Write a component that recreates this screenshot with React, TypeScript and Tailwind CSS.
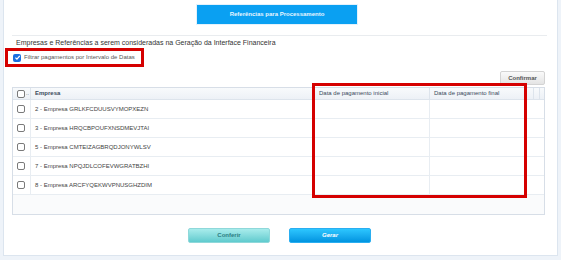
import React from 'react';

const rows = [
  '2 - Empresa GRLKFCDUUSVYMOPXEZN',
  '3 - Empresa HRQCBPOUFXNSDMEVJTAI',
  '5 - Empresa CMTEIZAGBRQDJONYWLSV',
  '7 - Empresa NPQJDLCOFEVWGRATBZHI',
  '8 - Empresa ARCFYQEKWVPNUSGHZDIM',
];

const Box: React.FC<{ checked?: boolean }> = ({ checked }) =>
  checked ? (
    <span className="flex h-[8px] w-[8px] items-center justify-center rounded-[2px] bg-[#1a6fe0]">
      <svg width="7" height="7" viewBox="0 0 10 10">
        <path d="M2 5.2 L4.2 7.4 L8.2 2.6" stroke="white" strokeWidth="1.8" fill="none" />
      </svg>
    </span>
  ) : (
    <span className="block h-[8px] w-[8px] rounded-[2px] border border-[#7a7a7a] bg-white" />
  );

export default function App() {
  return (
    <div className="h-[260px] w-[561px] overflow-hidden bg-[#eef3f9] px-[3px] font-['Liberation_Sans',Arial,sans-serif]">
      <div className="h-[256px] border-x border-b border-[#dce5ef] bg-white pt-[5px]">
        <div className="ml-[193px] flex h-[19px] w-[160px] items-center justify-center bg-[#0aa0f2] text-[6px] font-bold text-[#e8f6ff] shadow-[0_0_0_1px_#e3f2fc]">
          Referências para Processamento
        </div>

        <div className="ml-[8px] mt-[11px] h-px w-[535px] bg-[#e9ecef]" />

        <div className="ml-[12px] mt-[3px] text-[7px] leading-[8px] text-[#333]">
          Empresas e Referências a serem consideradas na Geração da Interface Financeira
        </div>

        <div className="ml-[1px] mt-[1px] flex h-[19px] w-[139px] items-center gap-[3px] border-[3px] border-[#d50000] pl-[5px]">
          <Box checked />
          <span className="text-[6px] text-[#555]">Filtrar pagamentos por Intervalo de Datas</span>
        </div>

        <div className="flex justify-end pr-[12px] pt-[4px]">
          <div className="flex h-[14px] w-[45px] items-center justify-center rounded-[2px] border border-[#d3d3d3] bg-gradient-to-b from-[#fafafa] to-[#e4e4e4] text-[6px] font-bold text-[#555]">
            Confirmar
          </div>
        </div>

        <div className="relative ml-[8px] mt-[2px] h-[128px] w-[533px] border border-[#d7dee7] bg-[#fafbfc]">
          <div className="flex h-[12px] border-b border-[#dde4ec] bg-gradient-to-b from-[#f8fafc] to-[#edf1f6] text-[6px] text-[#3a4a5c]">
            <div className="flex w-[18px] items-center gap-[1px] border-r border-[#dde4ec] pl-[4px]">
              <Box />
              <span className="text-[5px] leading-none">..</span>
            </div>
            <div className="flex w-[282px] items-center border-r border-[#dde4ec] pl-[4px] font-bold">Empresa</div>
            <div className="flex w-[117px] items-center border-r border-[#dde4ec] pl-[6px]">Data de pagamento inicial</div>
            <div className="flex w-[104px] items-center border-r border-[#dde4ec] pl-[4px]">Data de pagamento final</div>
            <div className="w-[6px] border-r border-[#dde4ec]" />
          </div>
          {rows.map((r) => (
            <div key={r} className="flex h-[19px] w-[531px] border-b border-[#e8edf2] bg-white text-[6px] text-[#444]">
              <div className="flex w-[18px] items-center border-r border-[#e8edf2] pl-[4px]">
                <Box />
              </div>
              <div className="flex w-[282px] items-center pl-[4px]">{r}</div>
              <div className="w-[117px] border-r border-[#e8edf2]" />
              <div className="w-[104px]" />
            </div>
          ))}
          <div className="pointer-events-none absolute left-[299px] top-[-5px] h-[115px] w-[215px] border-[3px] border-[#d50000]" />
        </div>

        <div className="mt-[13px] flex gap-[19px] pl-[184px]">
          <div className="flex h-[15px] w-[82px] items-center justify-center rounded-[2px] border border-[#8fd8da] bg-gradient-to-b from-[#a8ecec] to-[#5fcbce] text-[6px] font-bold text-[#2c7d83]">
            Conferir
          </div>
          <div className="flex h-[15px] w-[82px] items-center justify-center rounded-[2px] border border-[#2aaef0] bg-gradient-to-b from-[#2cc6ff] to-[#0094e0] text-[6px] font-bold italic text-white">
            Gerar
          </div>
        </div>
      </div>
    </div>
  );
}
